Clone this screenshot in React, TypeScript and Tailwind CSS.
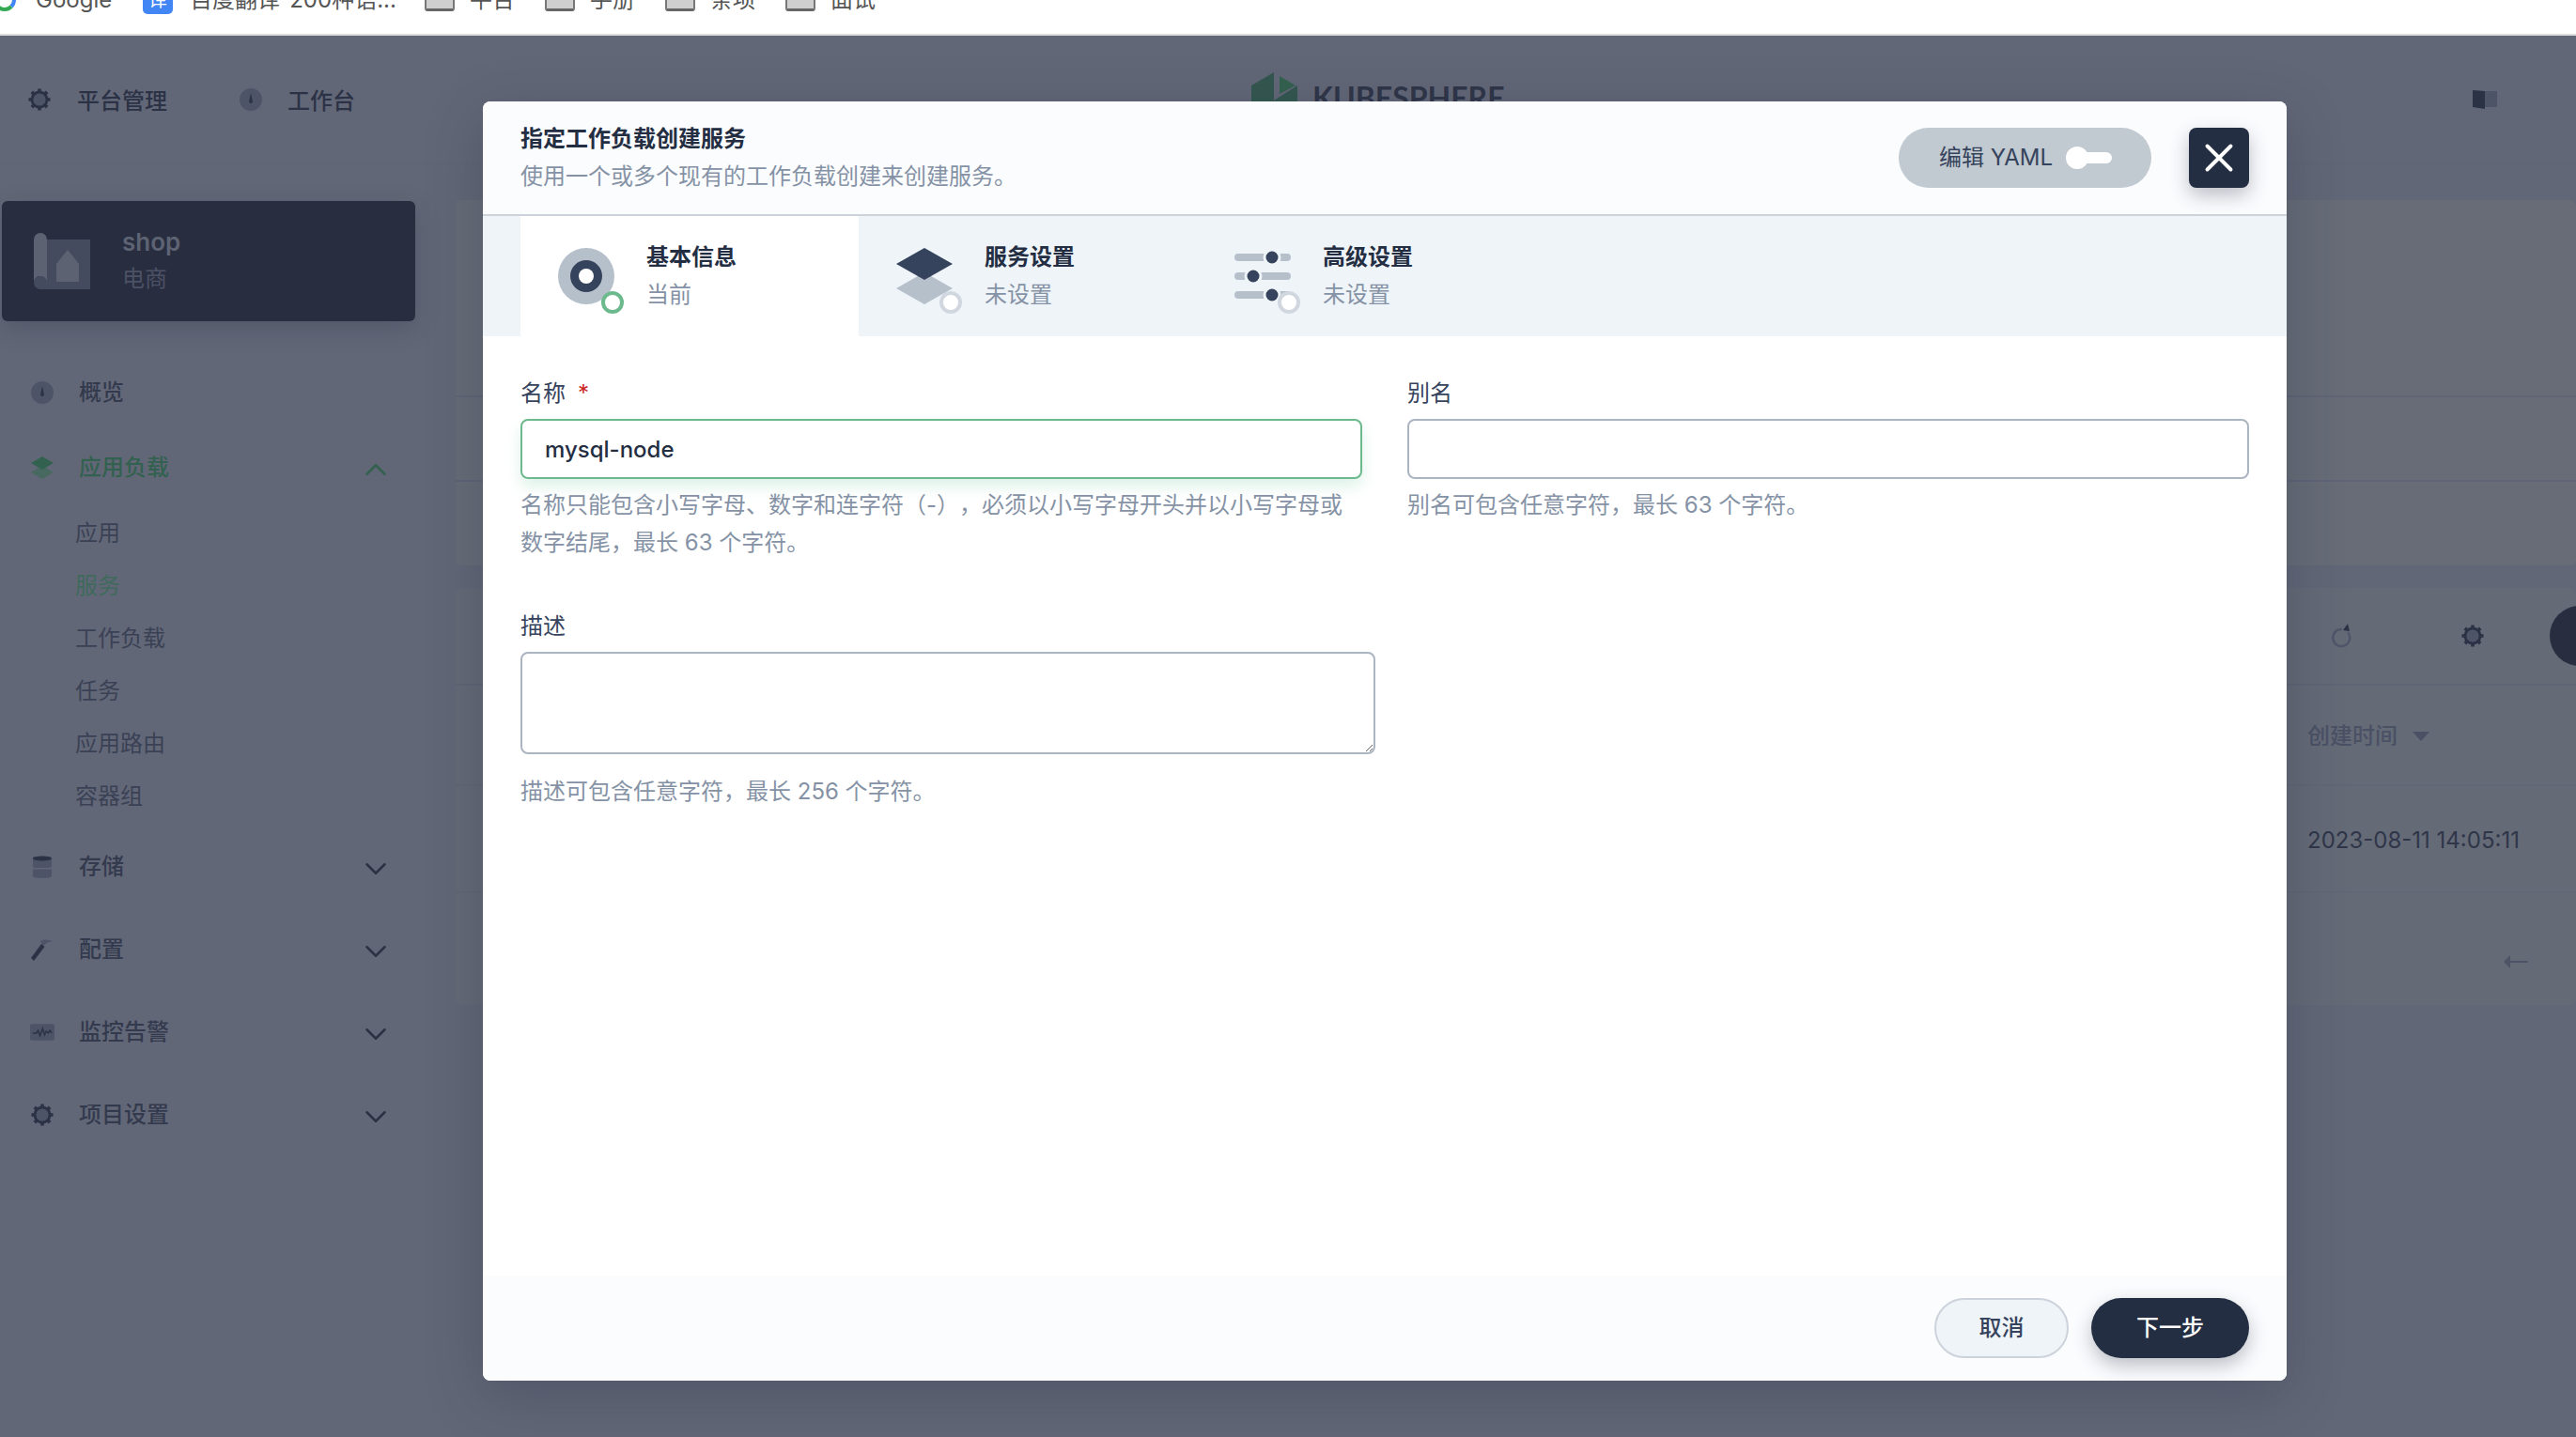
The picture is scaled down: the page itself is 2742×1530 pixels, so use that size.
import { ChevronDown, ChevronUp, X } from "lucide-react";

const menuDark = "#2b3246";
const menuLight = "#4d5468";
const green = "#33614f";

function GearIcon({ size = 24, color = menuDark }: { size?: number; color?: string }) {
  return (
    <svg width={size} height={size} viewBox="0 0 24 24" fill="none">
      {[0, 45, 90, 135, 180, 225, 270, 315].map((deg) => (
        <rect key={deg} x="10.2" y="0.5" width="3.6" height="4.5" fill={color} transform={`rotate(${deg} 12 12)`} />
      ))}
      <circle cx="12" cy="12" r="8" fill={menuLight} stroke={color} strokeWidth="2.8" />
    </svg>
  );
}

function GaugeIcon({ size = 24 }: { size?: number }) {
  return (
    <svg width={size} height={size} viewBox="0 0 24 24">
      <circle cx="12" cy="12" r="12" fill={menuLight} />
      <path d="M12 5l1.800 8.500a1.900 1.900 0 1 1-3.600 0z" fill={menuDark} />
    </svg>
  );
}

function LayersIcon() {
  return (
    <svg width="24" height="24" viewBox="0 0 24 24">
      <path d="M12 10l12 7-12 7-12-7z" fill="#47695f" />
      <path d="M12 0l12 7-12 7-12-7z" fill={green} />
    </svg>
  );
}

function StorageIcon() {
  return (
    <svg width="24" height="24" viewBox="0 0 24 24">
      <rect x="2" y="1" width="20" height="12" rx="2" fill={menuLight} />
      <path d="M2 3c0-1.500 4.500-2.500 10-2.500S22 1.500 22 3s-4.500 2.500-10 2.500S2 4.500 2 3z" fill={menuDark} />
      <path d="M2 14.500h20V22c0 1-4.500 2-10 2S2 23 2 22z" fill={menuLight} />
    </svg>
  );
}

function HammerIcon() {
  return (
    <svg width="24" height="24" viewBox="0 0 24 24">
      <path d="M10 3c4-2.500 9-2 14 1-4-.5-6 0-8 1.500L13 8z" fill={menuLight} />
      <path d="M11 6l3.500 3L3 24l-3-3z" fill={menuDark} />
    </svg>
  );
}

function MonitorIcon() {
  return (
    <svg width="27" height="24" viewBox="0 0 27 24">
      <rect x="0" y="3" width="27" height="18" rx="2" fill={menuLight} />
      <path d="M3 13h4l2-3 2 6 3-8 2 7 2-4 2 2 2-3 2 3" fill="none" stroke={menuDark} strokeWidth="1.500" />
    </svg>
  );
}

function ShopIcon() {
  return (
    <svg width="60" height="60" viewBox="0 0 60 60">
      <path d="M6 7h54v53H6z" fill="#454b5e" />
      <path d="M0 7a7 7 0 0 1 14 0v46a7 7 0 0 0-14 0z" fill="#5c6272" />
      <path d="M0 53a7 7 0 0 1 14 0 7 7 0 0 1-14 0z" fill="#454b5e" />
      <path d="M36 18l12 15v19H24V33z" fill="#5c6272" />
    </svg>
  );
}

function StepRing({ active }: { active?: boolean }) {
  return <circle cx="58" cy="58" r="10" fill="#fff" stroke={active ? "#6cb98d" : "#d1d7df"} strokeWidth="4" />;
}

function BasicInfoIcon() {
  return (
    <svg width="72" height="72" viewBox="0 0 72 72">
      <circle cx="30" cy="30" r="30" fill="#b6c0cb" />
      <circle cx="30" cy="30" r="17" fill="#36435c" />
      <circle cx="30" cy="30" r="8" fill="#fff" />
      <StepRing active />
    </svg>
  );
}

function ServiceIcon() {
  return (
    <svg width="72" height="72" viewBox="0 0 72 72">
      <path d="M30 26l30 17-30 17L0 43z" fill="#b6c0cb" />
      <path d="M30 0l30 17-30 17L0 17z" fill="#36435c" />
      <StepRing />
    </svg>
  );
}

function AdvancedIcon() {
  const rows = [
    { y: 10, dot: 40 },
    { y: 30, dot: 20 },
    { y: 50, dot: 40 },
  ];
  return (
    <svg width="72" height="72" viewBox="0 0 72 72">
      {rows.map((row) => (
        <g key={row.y}>
          <rect x="0" y={row.y - 4} width="60" height="8" rx="4" fill="#b6c0cb" />
          <circle cx={row.dot} cy={row.y} r="8" fill="#36435c" stroke="#eff4f9" strokeWidth="3" />
        </g>
      ))}
      <StepRing />
    </svg>
  );
}

function Folder() {
  return <span className="h-[24px] w-[32px] shrink-0 rounded-b-[3px] border-x-2 border-b-[3px] border-x-[#777] border-b-[#666] bg-[#cfcfcf]" />;
}

function BookmarkBar() {
  return (
    <div className="h-[38px] shrink-0 overflow-hidden border-b-2 border-[#dcdcdc] bg-white text-[24px] text-[#555]">
      <div className="-mt-[24px] flex h-[48px] items-center">
        <div className="-ml-[7px] flex w-[159px] items-center gap-[21px]">
          <svg width="24" height="24" viewBox="0 0 24 24" fill="none" strokeWidth="4">
            <path d="M22 12a10 10 0 0 1-3 7" stroke="#4285f4" />
            <path d="M19 19a10 10 0 0 1-15-1" stroke="#34a853" />
          </svg>
          <span>Google</span>
        </div>
        <div className="flex w-[300px] items-center gap-[18px]">
          <span className="flex h-[30px] w-[32px] items-center justify-center self-center rounded-[5px] bg-[#4285f4] text-[20px] text-white">译</span>
          <span>百度翻译-200种语...</span>
        </div>
        {["平台", "手册", "条项", "面试"].map((name) => (
          <div key={name} className="flex w-[128px] items-center gap-[16px]">
            <Folder />
            <span>{name}</span>
          </div>
        ))}
      </div>
    </div>
  );
}

function TopNav() {
  return (
    <header className="flex h-[138px] shrink-0 items-center border-b-2 border-[#60657490] pl-[30px] pr-[84px] text-[24px] font-medium text-[#2b3246]">
      <GearIcon />
      <span className="ml-[28px] translate-y-[2px]">平台管理</span>
      <span className="ml-[77px]">
        <GaugeIcon />
      </span>
      <span className="ml-[27px] translate-y-[2px]">工作台</span>
      <div className="ml-[954px] flex items-center gap-[16px]">
        <svg width="49" height="58" viewBox="0 0 49 58">
          <path d="M0 14L24 0v14L0 30zM0 30l24-16v30L0 58z" fill="#33574f" />
          <path d="M30 4l17 10-17 9z" fill="#33614f" />
          <path d="M49 14v30L24 58V30z" fill="#33574f" />
        </svg>
        <span className="-translate-y-[2px] text-[32px] font-bold leading-none text-[#2f3548] [font-family:Lato,sans-serif]">KUBESPHERE</span>
      </div>
      <svg className="ml-auto" width="26" height="20" viewBox="0 0 26 20">
        <path d="M0 0l13 1v19L0 18z" fill={menuDark} />
        <rect x="13" y="1" width="13" height="17" fill={menuLight} />
      </svg>
    </header>
  );
}

function MenuRow({ icon, label, open, active, className = "" }: { icon: React.ReactNode; label: string; open?: boolean; active?: boolean; className?: string }) {
  const hasChildren = open !== undefined;
  return (
    <div className={`flex h-[88px] items-center pl-[32px] pr-[63px] font-medium ${active ? "text-[#33614f]" : "text-[#333a4e]"} ${className}`}>
      <span className="flex w-[26px] justify-center">{icon}</span>
      <span className="ml-[26px] flex-1">{label}</span>
      {hasChildren &&
        (open ? (
          <ChevronUp size={38} strokeWidth={1.6} className="translate-y-[2px]" />
        ) : (
          <ChevronDown size={38} strokeWidth={1.6} className="translate-y-[2px] text-[#2b3246]" />
        ))}
    </div>
  );
}

function Sidebar() {
  const subItems = ["应用", "服务", "工作负载", "任务", "应用路由", "容器组"];
  return (
    <aside className="w-[482px] shrink-0 text-[24px]">
      <div className="ml-[2px] mt-[38px] flex h-[128px] w-[440px] items-center gap-[34px] rounded-[6px] bg-[#282d40] pl-[34px] shadow-[0_8px_24px_rgba(36,46,66,0.25)]">
        <ShopIcon />
        <div className="flex flex-col">
          <span className="text-[26px] font-semibold leading-[38px] text-[#5d6373]">shop</span>
          <span className="leading-[40px] text-[#4c5265]">电商</span>
        </div>
      </div>
      <MenuRow className="mt-[32px]" icon={<GaugeIcon />} label="概览" />
      <MenuRow className="-mt-[8px]" icon={<LayersIcon />} label="应用负载" open active />
      <div className="-mt-[2px] mb-[3px] flex flex-col pl-[80px]">
        {subItems.map((item) => (
          <div key={item} className={`flex h-[56px] items-center ${item === "服务" ? "text-[#3f6a5c]" : "text-[#3a4155]"}`}>
            {item}
          </div>
        ))}
      </div>
      <MenuRow icon={<StorageIcon />} label="存储" open={false} />
      <MenuRow icon={<HammerIcon />} label="配置" open={false} />
      <MenuRow icon={<MonitorIcon />} label="监控告警" open={false} />
      <MenuRow icon={<GearIcon />} label="项目设置" open={false} />
    </aside>
  );
}

function MainPanels() {
  return (
    <main className="ml-[3px] mt-[37px] flex-1 text-[24px]">
      <section className="h-[389px] rounded-[6px] bg-[#676c77]">
        <div className="h-[210px] border-b-2 border-[#5f6477]" />
        <div className="h-[90px] border-b-2 border-[#5f6477]" />
      </section>
      <section className="mt-[24px] h-[444px] rounded-[6px] bg-[#656a77] text-[#2f3649]">
        <div className="flex h-[104px] items-center justify-end border-b-2 border-[#606575]">
          <svg width="24" height="26" viewBox="0 0 24 26" fill="none">
            <path d="M19 9a9 9 0 1 1-6-3" stroke="#4f5669" strokeWidth="2.500" />
            <path d="M14 7l5-7 2 8z" fill={menuDark} />
          </svg>
          <span className="ml-[116px]">
            <GearIcon />
          </span>
          <span className="-mr-[36px] ml-[70px] h-[64px] w-[64px] shrink-0 rounded-full bg-[#282d40]" />
        </div>
        <div className="flex h-[107px] items-center justify-end border-b-2 border-[#626776] pt-[3px]">
          <div className="flex w-[286px] items-center gap-[16px] font-medium text-[#4a5165]">
            <span>创建时间</span>
            <span className="h-0 w-0 border-x-[9px] border-t-[10px] border-x-transparent border-t-[#4a5165]" />
          </div>
        </div>
        <div className="flex h-[114px] items-center justify-end border-b-2 border-[#626776] pt-[3px]">
          <span className="w-[286px]">2023-08-11 14:05:11</span>
        </div>
        <div className="flex h-[119px] items-start justify-end pr-[51px] pt-[66px]">
          <svg width="26" height="14" viewBox="0 0 26 14">
            <path d="M0 7l7-7v14z" fill={menuLight} />
            <rect x="7" y="6" width="19" height="2" fill={menuLight} />
          </svg>
        </div>
      </section>
    </main>
  );
}

function Step({ icon, title, status, current }: { icon: React.ReactNode; title: string; status: string; current?: boolean }) {
  return (
    <div className={`flex h-full w-[360px] items-center pl-[40px] ${current ? "bg-white" : ""}`}>
      <div className="h-[72px] w-[72px] shrink-0 translate-y-[6px]">{icon}</div>
      <div className="-ml-[38px] pl-[60px]">
        <div className="h-[40px] text-[24px] font-semibold leading-[40px] text-[#242e42]">{title}</div>
        <div className="text-[24px] leading-[40px] text-[#8592a5]">{status}</div>
      </div>
    </div>
  );
}

function Field({ label, required, hint, value, focused }: { label: string; required?: boolean; hint: string; value?: string; focused?: boolean }) {
  return (
    <div>
      <label className="mb-[11px] flex h-[32px] items-center text-[24px] text-[#36435c]">
        {label}
        {required && <span className="ml-[13px] text-[#ca2621]">*</span>}
      </label>
      <input
        readOnly
        value={value ?? ""}
        className={`h-[64px] w-full rounded-[8px] border-2 bg-white px-[24px] text-[24px] font-medium text-[#242e42] outline-none ${
          focused ? "border-[#6cb98d] shadow-[0_8px_16px_rgba(85,188,138,0.2)]" : "border-[#abb4c1]"
        }`}
      />
      <p className="mt-[8px] text-[24px] leading-[40px] text-[#8592a5]">{hint}</p>
    </div>
  );
}

function CreateServiceModal() {
  return (
    <div className="absolute left-[514px] top-[108px] flex h-[1362px] w-[1920px] flex-col overflow-hidden rounded-[8px] bg-white shadow-[0_16px_60px_rgba(36,46,66,0.3)]">
      <div className="flex h-[122px] shrink-0 items-center justify-between border-b-2 border-[#ccd3db] bg-[#fbfcfe] pl-[40px] pr-[40px]">
        <div>
          <h1 className="h-[40px] text-[24px] font-semibold leading-[40px] text-[#242e42]">指定工作负载创建服务</h1>
          <p className="text-[24px] leading-[40px] text-[#8592a5]">使用一个或多个现有的工作负载创建来创建服务。</p>
        </div>
        <div className="flex items-center gap-[40px]">
          <div className="flex h-[64px] w-[269px] items-center rounded-full bg-[#c1c9d1] pl-[43px] text-[24px] text-[#36435c]">
            <span>编辑 YAML</span>
            <span className="ml-[14px] flex items-center">
              <span className="h-[24px] w-[24px] rounded-full bg-white" />
              <span className="-ml-[8px] h-[12px] w-[33px] rounded-r-full bg-white" />
            </span>
          </div>
          <button className="flex h-[64px] w-[64px] items-center justify-center rounded-[8px] bg-[#242e42] text-white shadow-[0_8px_20px_rgba(36,46,66,0.3)]">
            <X size={50} strokeWidth={1.9} />
          </button>
        </div>
      </div>

      <div className="flex h-[128px] shrink-0 bg-[#eff4f9] pl-[40px]">
        <Step current icon={<BasicInfoIcon />} title="基本信息" status="当前" />
        <Step icon={<ServiceIcon />} title="服务设置" status="未设置" />
        <Step icon={<AdvancedIcon />} title="高级设置" status="未设置" />
      </div>

      <div className="flex-1 px-[40px] pt-[45px]">
        <div className="grid grid-cols-[896px_896px] gap-x-[48px]">
          <Field label="名称" required value="mysql-node" focused hint="名称只能包含小写字母、数字和连字符（-），必须以小写字母开头并以小写字母或数字结尾，最长 63 个字符。" />
          <Field label="别名" hint="别名可包含任意字符，最长 63 个字符。" />
        </div>
        <label className="mb-[11px] mt-[53px] flex h-[32px] items-center text-[24px] text-[#36435c]">描述</label>
        <textarea readOnly className="block h-[109px] w-[910px] rounded-[8px] border-2 border-[#abb4c1] bg-white outline-none" />
        <p className="mt-[20px] text-[24px] leading-[40px] text-[#8592a5]">描述可包含任意字符，最长 256 个字符。</p>
      </div>

      <div className="flex h-[112px] shrink-0 items-center justify-end gap-[24px] bg-[#fbfcfe] pr-[40px] text-[24px]">
        <button className="h-[64px] w-[143px] rounded-full border-2 border-[#ccd3db] bg-[#eff4f9] font-medium text-[#36435c]">取消</button>
        <button className="h-[64px] w-[168px] rounded-full bg-[#242e42] font-medium text-white shadow-[0_8px_20px_rgba(36,46,66,0.3)]">下一步</button>
      </div>
    </div>
  );
}

export default function App() {
  return (
    <div className="relative flex h-[1530px] w-[2742px] flex-col overflow-hidden bg-[#626777] [font-family:Inter,'Noto_Sans_CJK_SC',sans-serif] [text-spacing-trim:space-all]">
      <BookmarkBar />
      <TopNav />
      <div className="flex flex-1">
        <Sidebar />
        <MainPanels />
      </div>
      <CreateServiceModal />
    </div>
  );
}
